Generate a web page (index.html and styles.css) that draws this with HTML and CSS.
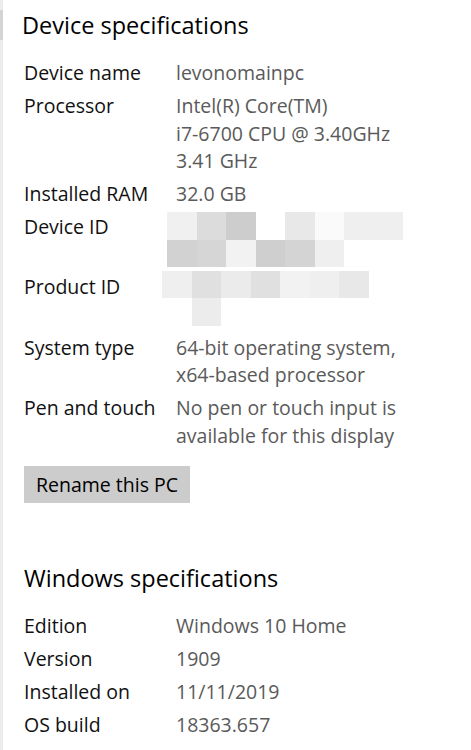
FILE: index.html
```html
<!DOCTYPE html>
<html>
<head>
<meta charset="utf-8">
<link rel="stylesheet" href="styles.css">
</head>
<body>
<div class="page">
  <div class="rail"><div class="rail-thumb"></div></div>
  <main class="content">
    <h1 class="title">Device specifications</h1>
    <dl class="specs">
      <dt>Device name</dt><dd>levonomainpc</dd>
      <dt>Processor</dt><dd>Intel(R) Core(TM)<br>i7-6700 CPU @ 3.40GHz<br>3.41 GHz</dd>
      <dt>Installed RAM</dt><dd>32.0 GB</dd>
      <dt>Device ID</dt>
      <dd>
        <div class="blur blur-device">
          <span style="background:#f0f0f0"></span><span style="background:#dcdcdc"></span><span style="background:#cdcdcd"></span><span style="background:#ffffff"></span><span style="background:#e8e8e8"></span><span style="background:#fafafa"></span><span style="background:#efefef"></span><span style="background:#efefef"></span>
          <span style="background:#d2d2d2"></span><span style="background:#d6d6d6"></span><span style="background:#f2f2f2"></span><span style="background:#cfcfcf"></span><span style="background:#d4d4d4"></span><span style="background:#efefef"></span><span style="background:#ffffff"></span><span style="background:#ffffff"></span>
        </div>
      </dd>
      <dt>Product ID</dt>
      <dd>
        <div class="blur blur-product">
          <span style="background:#efefef"></span><span style="background:#e0e0e0"></span><span style="background:#ebebeb"></span><span style="background:#e0e0e0"></span><span style="background:#f2f2f2"></span><span style="background:#efefef"></span><span style="background:#e8e8e8"></span>
          <span style="background:#ffffff"></span><span style="background:#ececec"></span><span style="background:#ffffff"></span><span style="background:#ffffff"></span><span style="background:#ffffff"></span><span style="background:#ffffff"></span><span style="background:#ffffff"></span>
        </div>
      </dd>
      <dt>System type</dt><dd>64-bit operating system,<br>x64-based processor</dd>
      <dt>Pen and touch</dt><dd>No pen or touch input is<br>available for this display</dd>
    </dl>
    <button class="btn">Rename this PC</button>

    <h1 class="title title-win">Windows specifications</h1>
    <dl class="specs">
      <dt>Edition</dt><dd>Windows 10 Home</dd>
      <dt>Version</dt><dd>1909</dd>
      <dt>Installed on</dt><dd>11/11/2019</dd>
      <dt>OS build</dt><dd>18363.657</dd>
    </dl>
  </main>
</div>
</body>
</html>
```
FILE: styles.css
```css
* { box-sizing: border-box; }
html, body {
  margin: 0;
  padding: 0;
  background: #ffffff;
}
body {
  font-family: "Open Sans", "Noto Sans", sans-serif;
  color: #000;
  width: 471px;
  height: 750px;
  overflow: hidden;
}
.page {
  display: flex;
  height: 750px;
}
.rail {
  width: 3px;
  flex: none;
  background: #ececec;
  padding-top: 10px;
}
.rail-thumb {
  height: 30px;
  background: #d4d4d4;
}
.content {
  flex: 1;
  padding-left: 19px;
}
.title {
  margin: 8px 0 0 0;
  font-weight: 400;
  font-size: 23.5px;
  line-height: 34px;
  color: #000;
}
.title-win {
  margin-top: 58px;
  padding-left: 2px;
}
.specs {
  margin: 17px 0 0 2px;
  display: grid;
  grid-template-columns: 152px 1fr;
  row-gap: 5.5px;
  font-size: 19.5px;
  line-height: 27.5px;
}
.specs dt {
  margin: 0;
  color: #111;
}
.specs dd {
  margin: 0;
  color: #5a5a5a;
}
.blur {
  display: grid;
  grid-auto-rows: 27.5px;
}
.blur span { display: block; }
.blur-device {
  grid-template-columns: repeat(8, 29.5px);
  margin-left: -9px;
  margin-top: -1px;
}
.blur-product {
  grid-template-columns: repeat(7, 29.5px);
  margin-left: -14px;
  margin-top: -2px;
  margin-bottom: 2.5px;
}
.btn {
  display: block;
  margin: 17px 0 0 2px;
  width: 166px;
  height: 37px;
  border: none;
  background: #cccccc;
  font-family: inherit;
  font-size: 19.5px;
  color: #000;
  padding: 0;
}
```
